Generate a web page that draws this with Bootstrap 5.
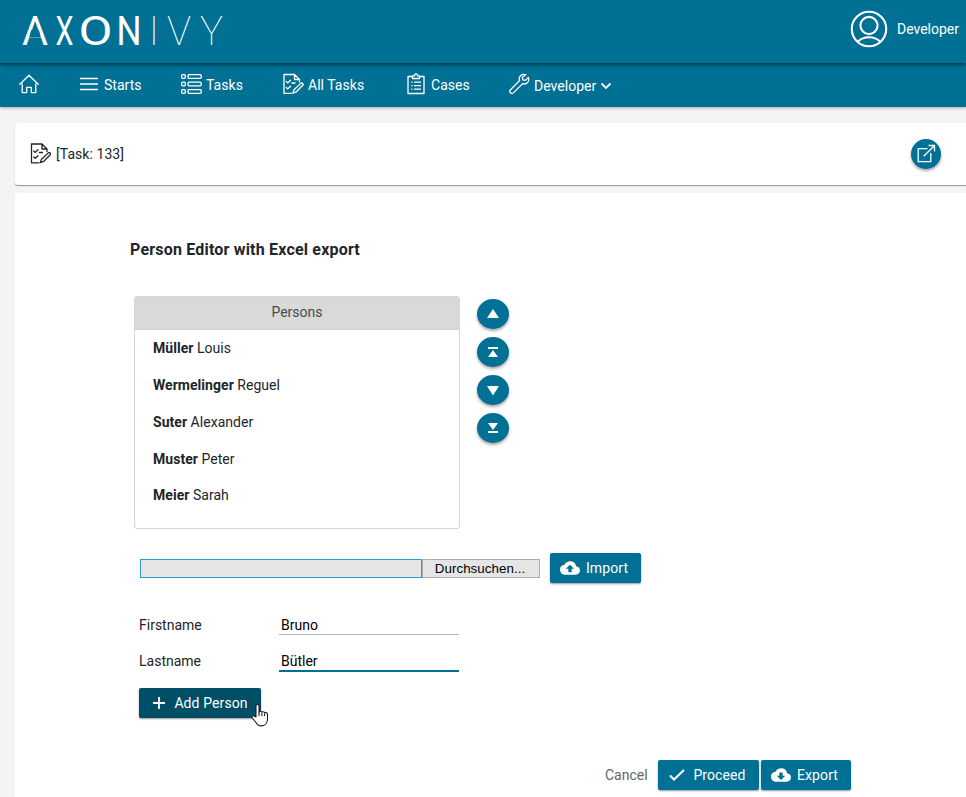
<!DOCTYPE html>
<html lang="en">
<head>
<meta charset="utf-8">
<meta name="viewport" content="width=device-width, initial-scale=1">
<title>Person Editor</title>
<link href="https://cdn.jsdelivr.net/npm/bootstrap@5.3.0/dist/css/bootstrap.min.css" rel="stylesheet">
<style>
:root{--ivy:#007095;--ivy-dark:#004f67}
body{font-family:Roboto,"Liberation Sans",sans-serif;font-size:14px;line-height:20px;color:#212529;background:#f4f4f4;height:797px;overflow:hidden}
svg{display:block;flex:none}
.line-icon{fill:none;stroke:currentColor;stroke-width:1.3;stroke-linejoin:round;stroke-linecap:round}
.topbar{height:63px;background:var(--ivy);box-shadow:0 1px 4px rgba(0,0,0,.75);z-index:2;padding:0 7px 0 0}
.user-box{padding-bottom:5px}
.user-icon{margin-right:9px}
.menubar{height:44px;background:var(--ivy);box-shadow:0 1px 3px rgba(0,0,0,.3);padding-left:19px}
.menubar .nav-link{color:#fff;padding:0 0 2px;height:44px;font-weight:400;letter-spacing:.03px}
.menubar .nav-link span{padding-top:1px}
.gap-text{margin-left:6px}
.menu-home{width:61px}.menu-starts{width:101px}.menu-tasks{width:102px}.menu-all{width:124px}.menu-cases{width:102px}
.taskbar{height:62px;margin:16px 0 0 15px;padding:0 25px 0 15px;background:#fff;border-radius:3px 0 0 3px;box-shadow:0 1px 1px rgba(0,0,0,.4)}
.task-name{margin-left:5px;letter-spacing:.06px}
.btn-round{width:30px;height:30px;border-radius:50%;padding:0;background:var(--ivy);color:#fff;box-shadow:0 2px 3px rgba(0,0,0,.35)}
.panel-main{margin:8px 0 0 15px;height:604px;background:#fff;padding:46px 0 0 115px;border-radius:3px 0 0 0}
.page-title{font-size:16px;line-height:22px;font-weight:700;margin:0 0 35px;letter-spacing:.19px}
.person-box{width:326px;height:233px;border:1px solid #d5d6d6;border-radius:3px;margin-left:4px}
.person-head{height:33px;background:#d8dad9;color:#4a4a4a;border-bottom:1px solid #d0d2d1;line-height:31px}
.person-box li{height:36.8px;padding:8.2px 0 0 18px;letter-spacing:.04px}
.order-btns{margin:3px 0 0 17px;gap:8px}
.order-btns .btn-round{width:32px}
.file-row{margin:24px 0 0 10px}
.file-path,.file-browse{height:19px;background:#e5e5e5}
.file-path{width:282px;border:1px solid #2a9bd5}
.file-browse{width:118px;border:1px solid #adadad;font:13.33px/17px "Liberation Sans",sans-serif;color:#000;letter-spacing:.06px;padding:0 2px 0 0}
.btn-ivy{height:30px;border:0;border-radius:2px;background:var(--ivy);color:#fff;font-size:14px;padding:0;box-shadow:0 1px 2px rgba(0,0,0,.4);letter-spacing:.1px}
.w-import{width:91px;margin-left:10px;padding-right:3px}.w-add{width:122px}.w-proceed{width:101px;padding-right:2px}.w-export{width:90px;margin-left:2px;padding-right:3px}
.btn-add{background:var(--ivy-dark)}
.btn-ivy .gap-text{margin-left:6px}
.field-row{margin-left:9px}
.add-row{margin-top:16px}
.field-label{width:140px}
.field-input{width:180px;height:20px;border:0;border-bottom:1px solid #b5b5b5;padding:0 2px;color:#000;outline:0;background:none}
.field-input.active{height:21px;border-bottom:2px solid var(--ivy)}
.foot{margin:42px 0 0 475px}
.cancel{color:#666;width:53px}
.pointer{left:112px;top:15px}
</style>
</head>
<body class="d-flex flex-column">
<header class="topbar position-relative d-flex align-items-center justify-content-between flex-shrink-0">
  <svg width="240" height="63" viewBox="0 0 240 63" font-family="Roboto" font-size="41.5" fill="#fff" role="img" aria-label="AXON IVY">
    <text x="22" y="44.5" textLength="26" lengthAdjust="spacingAndGlyphs">A</text>
    <path d="M31.200 30h7.600l2 7h-11.600z" fill="#007095"/>
    <text transform="translate(55.500 44.500) scale(.69 1)">X</text>
    <text x="78.500" y="44.5" textLength="34" lengthAdjust="spacingAndGlyphs">O</text>
    <text x="116.500" y="44.5" textLength="25" lengthAdjust="spacingAndGlyphs">N</text>
    <g font-weight="100">
    <text x="148.500" y="44.5">I</text>
    <text x="167" y="44.5" textLength="24" lengthAdjust="spacingAndGlyphs">V</text>
    <text x="200" y="44.5" textLength="23" lengthAdjust="spacingAndGlyphs">Y</text></g>
  </svg>
  <div class="user-box d-flex align-items-center text-white">
    <svg class="user-icon" width="38" height="38" viewBox="0 0 38 38" fill="none" stroke="#fff" stroke-width="2.1"><circle cx="19" cy="19" r="17.2"/><circle cx="19" cy="15.5" r="8.6"/><path d="M7.7 31.8c6-6 16.600-6 22.600 0"/></svg>
    <span class="user-name">Developer</span>
  </div>
</header>
<nav class="menubar nav flex-nowrap flex-shrink-0">
  <a class="nav-link menu-home d-flex align-items-center" href="#" aria-label="Home"><svg class="line-icon" width="20" height="20" viewBox="0 0 20 20"><path d="M.8 10.300 10 1.200l9.200 9.100M3.200 10v8.600h4.500v-5.200h4.600v5.200h4.500V10"/></svg></a>
  <a class="nav-link menu-starts d-flex align-items-center" href="#"><svg width="18" height="14" viewBox="0 0 18 14" stroke="#fff" stroke-width="1.300"><path d="M0 1.500h18M0 7h18M0 12.500h18"/></svg><span class="gap-text">Starts</span></a>
  <a class="nav-link menu-tasks d-flex align-items-center" href="#"><svg class="line-icon" width="21" height="22" viewBox="0 0 21 22"><rect x=".7" y="1.700" width="3.600" height="3.600" rx="1"/><rect x="7" y="1.700" width="13.200" height="3.600" rx="1"/><rect x=".7" y="9.200" width="3.600" height="3.600" rx="1"/><rect x="7" y="9.200" width="13.200" height="3.600" rx="1"/><rect x=".7" y="16.700" width="3.600" height="3.600" rx="1"/><rect x="7" y="16.700" width="13.200" height="3.600" rx="1"/></svg><span class="ms-1">Tasks</span></a>
  <a class="nav-link menu-all d-flex align-items-center" href="#"><svg class="line-icon" width="21" height="22" viewBox="0 0 21 22"><path id="taskdoc" d="M8.500 20.300H1V1.500h10.500l5 5V9M11.500 1.500v5h5M3.300 8.500l1.500 1.400L7.500 7.200M3.300 14.500l1.500 1.400 2.700-2.700M9 10h3M11 16.800l6.800-6.400c1.300-1 3 .6 2 1.900l-6.500 6.500-3.500 1.300z"/></svg><span class="ms-1">All Tasks</span></a>
  <a class="nav-link menu-cases d-flex align-items-center" href="#"><svg class="line-icon" width="18" height="22" viewBox="0 0 18 22"><path d="M5 3.500H1v17h16v-17h-4M5.500 2.800h1.800c.4-2.400 3-2.400 3.400 0h1.800v2.700h-7zM4.800 9.200h.3M7.500 9.200h6M4.800 12.700h.3M7.500 12.700h6M4.800 16.200h.3M7.500 16.200h6"/></svg><span class="gap-text">Cases</span></a>
  <a class="nav-link d-flex align-items-center pt-1" href="#"><svg class="line-icon mb-1" width="21" height="22" viewBox="0 0 21 22"><path d="M16.800 1.700c-4-1.500-7.700 1.800-6.200 5.800L1.300 17c-1.700 1.900 1.200 4.600 3 2.900l9.300-9.300c4 1.500 7.300-2.200 5.800-6.200l-3 3-2.500-.6-.6-2.500z"/></svg><span class="ms-1 pt-0">Developer</span><svg class="ms-1" width="12" height="8" viewBox="0 0 12 8" fill="none" stroke="#fff" stroke-width="1.800"><path d="M1.500 1.500 6 6l4.500-4.500"/></svg></a>
</nav>
<section class="taskbar d-flex align-items-center justify-content-between flex-shrink-0">
  <div class="d-flex align-items-center"><svg class="line-icon" width="21" height="22" viewBox="-.5 .5 21 22"><use href="#taskdoc"/></svg><span class="task-name">[Task: 133]</span></div>
  <button class="btn btn-round d-flex align-items-center justify-content-center" aria-label="Open"><svg width="20" height="20" viewBox="0 0 20 20" fill="none" stroke="#fff" stroke-width="1.300"><path d="M11.500 4.700H2.200v13h12.600V9M7.700 12.300 18.300 1.700M12.500 1.500h6v6"/></svg></button>
</section>
<main class="panel-main flex-shrink-0">
  <h1 class="page-title">Person Editor with Excel export</h1>
  <div class="d-flex align-items-start">
    <div class="person-box overflow-hidden">
      <div class="person-head text-center">Persons</div>
      <ul class="list-unstyled m-0">
        <li><strong>Müller</strong> Louis</li><li><strong>Wermelinger</strong> Reguel</li><li><strong>Suter</strong> Alexander</li><li><strong>Muster</strong> Peter</li><li><strong>Meier</strong> Sarah</li>
      </ul>
    </div>
    <div class="order-btns d-flex flex-column">
      <button class="btn btn-round d-flex align-items-center justify-content-center" aria-label="Up"><svg width="12" height="12" fill="#fff"><path d="M6 1l6 9H0z"/></svg></button>
      <button class="btn btn-round d-flex align-items-center justify-content-center" aria-label="Top"><svg width="12" height="12" fill="#fff"><path d="M1 1h10v2H1zM6 4l5 7H1z"/></svg></button>
      <button class="btn btn-round d-flex align-items-center justify-content-center" aria-label="Down"><svg width="12" height="12" fill="#fff"><path d="M0 2h12L6 11.500z"/></svg></button>
      <button class="btn btn-round d-flex align-items-center justify-content-center" aria-label="Bottom"><svg width="12" height="12" fill="#fff"><path d="M1 1h10L6 8zM1 9h10v2H1z"/></svg></button>
    </div>
  </div>
  <div class="file-row d-flex align-items-center">
    <div class="file-path"></div><button class="file-browse">Durchsuchen...</button>
    <button class="btn btn-ivy w-import d-flex align-items-center justify-content-center"><svg width="20" height="14" viewBox="0 4 24 16" fill="#fff"><path d="M19.350 10.040A7.490 7.490 0 0 0 12 4C9.110 4 6.600 5.640 5.350 8.040A5.994 5.994 0 0 0 0 14c0 3.310 2.690 6 6 6h13c2.760 0 5-2.240 5-5 0-2.640-2.050-4.780-4.650-4.960zM14 13v4h-4v-4H7l5-5 5 5h-3z"/></svg><span class="gap-text">Import</span></button>
  </div>
  <div class="field-row d-flex align-items-start mt-4 pt-2"><label class="field-label" for="fn">Firstname</label><input id="fn" class="field-input" value="Bruno"></div>
  <div class="field-row d-flex align-items-start mt-3"><label class="field-label" for="ln">Lastname</label><input id="ln" class="field-input active" value="Bütler"></div>
  <div class="field-row add-row position-relative">
    <button class="btn btn-ivy btn-add w-add d-flex align-items-center justify-content-center"><svg width="14" height="14" stroke="#fff" stroke-width="1.800"><path d="M1 7h12M7 1v12"/></svg><span class="ms-2">Add Person</span></button>
    <svg class="pointer position-absolute" width="18" height="24" viewBox="0 0 18 24" fill="#fff" stroke="#1b1b1b" stroke-width="1.100" stroke-linejoin="round"><path d="M5 14V3c0-2 3-2 3 0v6c.5-1.300 2.700-1 2.900.3.700-1 2.500-.7 2.700.6 1-.6 2.900-.1 2.900 1.500v4.500c0 4-2.500 7-6.500 7-2.800 0-4-1.400-5-3.400L1.200 15c-.9-2 1-2.700 2.200-1.700z"/><path d="M8 9v4M10.900 10v3M13.600 10.500V13"/></svg>
  </div>
  <div class="foot d-flex align-items-center">
    <span class="cancel">Cancel</span>
    <button class="btn btn-ivy w-proceed d-flex align-items-center justify-content-center"><svg width="16" height="12" fill="none" stroke="#fff" stroke-width="2"><path d="M1 6.500 5 10.500 15 1"/></svg><span class="ms-2">Proceed</span></button>
    <button class="btn btn-ivy w-export d-flex align-items-center justify-content-center"><svg width="20" height="14" viewBox="0 4 24 16" fill="#fff"><path d="M19.350 10.040A7.490 7.490 0 0 0 12 4C9.110 4 6.600 5.640 5.350 8.040A5.994 5.994 0 0 0 0 14c0 3.310 2.690 6 6 6h13c2.760 0 5-2.240 5-5 0-2.640-2.050-4.780-4.650-4.960zM17 13l-5 5-5-5h3V9h4v4h3z"/></svg><span class="gap-text">Export</span></button>
  </div>
</main>
<script src="https://cdn.jsdelivr.net/npm/bootstrap@5.3.0/dist/js/bootstrap.bundle.min.js"></script>
</body>
</html>
